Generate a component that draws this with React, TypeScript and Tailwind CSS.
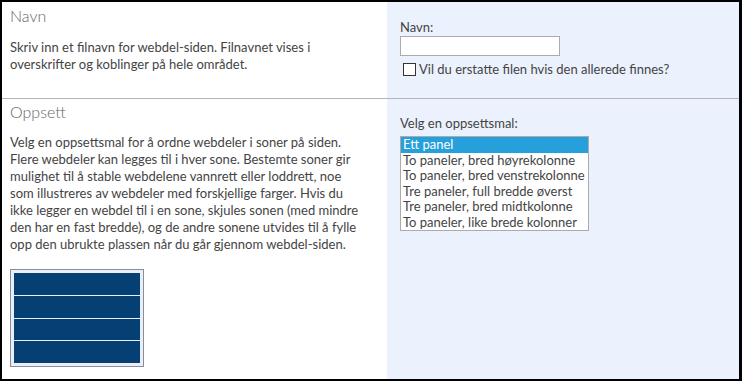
const layouts = [
  "Ett panel",
  "To paneler, bred høyrekolonne",
  "To paneler, bred venstrekolonne",
  "Tre paneler, full bredde øverst",
  "Tre paneler, bred midtkolonne",
  "To paneler, like brede kolonner",
];

function LayoutPreview() {
  return (
    <div className="flex h-[98px] w-[134px] flex-col gap-px border border-[#8a8d93] bg-[#e8effa] p-[3px]">
      <div className="flex-1 bg-[#053f74]" />
      <div className="flex-1 bg-[#053f74]" />
      <div className="flex-1 bg-[#053f74]" />
      <div className="flex-1 bg-[#053f74]" />
    </div>
  );
}

export default function App() {
  return (
    <div
      className="flex h-[381px] w-[742px] flex-col border-t-2 border-r-[3px] border-b-2 border-l-2 border-black bg-white text-[13px] leading-[17px] text-[#444]"
      style={{ fontFamily: "Lato, 'Open Sans', sans-serif" }}
    >
      {/* Navn */}
      <section className="flex h-[97px] border-b border-[#b5b5b5]">
        <div className="w-[385px] px-2 pt-[4px]">
          <h2 className="text-[16px] leading-5 font-light text-[#666]">Navn</h2>
          <p className="mt-[13px]">
            Skriv inn et filnavn for webdel-siden. Filnavnet vises i
            <br />
            overskrifter og koblinger på hele området.
          </p>
        </div>
        <div className="flex flex-1 flex-col bg-[#ebf2fd] pt-[17px] pl-[13px]">
          <label className="leading-[17px]">Navn:</label>
          <input
            type="text"
            className="mt-0 h-5 w-[160px] border border-[#ababab] bg-white outline-none"
          />
          <label className="mt-[5px] flex items-center gap-[3px] pl-[3px]">
            <span className="h-[13px] w-[13px] border border-[#333] bg-white" />
            Vil du erstatte filen hvis den allerede finnes?
          </label>
        </div>
      </section>

      {/* Oppsett */}
      <section className="flex flex-1">
        <div className="w-[385px] px-2 pt-[3px]">
          <h2 className="text-[16px] leading-5 font-light text-[#666]">Oppsett</h2>
          <p className="mt-[12px]">
            Velg en oppsettsmal for å ordne webdeler i soner på siden.
            <br />
            Flere webdeler kan legges til i hver sone. Bestemte soner gir
            <br />
            mulighet til å stable webdelene vannrett eller loddrett, noe
            <br />
            som illustreres av webdeler med forskjellige farger. Hvis du
            <br />
            ikke legger en webdel til i en sone, skjules sonen (med mindre
            <br />
            den har en fast bredde), og de andre sonene utvides til å fylle
            <br />
            opp den ubrukte plassen når du går gjennom webdel-siden.
          </p>
          <div className="mt-[16px]">
            <LayoutPreview />
          </div>
        </div>
        <div className="flex flex-1 flex-col bg-[#ebf2fd] pt-[16px] pl-[13px]">
          <label>Velg en oppsettsmal:</label>
          <div className="mt-[4px] w-[189px] border border-[#ababab] bg-white">
            {layouts.map((item, i) => (
              <div
                key={item}
                className={
                  i === 0
                    ? "h-[15.5px] bg-[#26a0da] px-[2px] leading-[15.5px] text-white"
                    : "h-[15.5px] px-[2px] leading-[15.5px]"
                }
              >
                {item}
              </div>
            ))}
          </div>
        </div>
      </section>
    </div>
  );
}
